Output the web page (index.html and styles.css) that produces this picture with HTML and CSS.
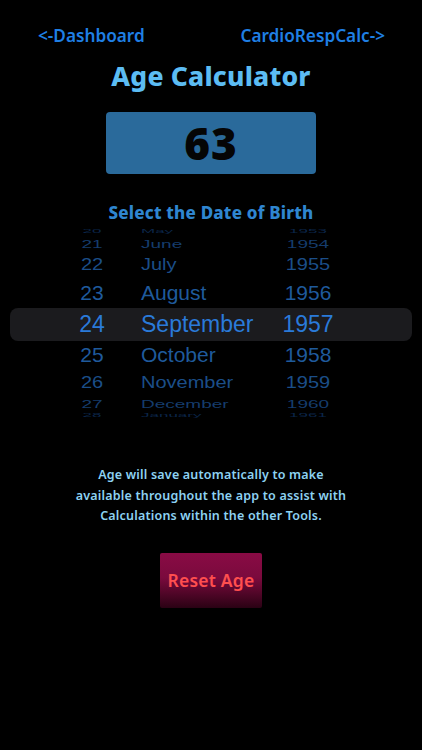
FILE: index.html
```html
<!DOCTYPE html>
<html>
<head>
<meta charset="utf-8">
<link rel="stylesheet" href="styles.css">
</head>
<body>
<div class="screen">
  <nav class="nav">
    <span class="link">&lt;-Dashboard</span>
    <span class="link">CardioRespCalc-&gt;</span>
  </nav>
  <h1 class="title">Age Calculator</h1>
  <div class="agebox">63</div>
  <h2 class="subtitle">Select the Date of Birth</h2>
  <div class="picker">
    <div class="band"></div>
    <div class="row r0"><span class="d">20</span><span class="m">May</span><span class="y">1953</span></div>
    <div class="row r1"><span class="d">21</span><span class="m">June</span><span class="y">1954</span></div>
    <div class="row r2"><span class="d">22</span><span class="m">July</span><span class="y">1955</span></div>
    <div class="row r3 above"><span class="d">23</span><span class="m">August</span><span class="y">1956</span></div>
    <div class="row sel"><span class="d">24</span><span class="m">September</span><span class="y">1957</span></div>
    <div class="row r3"><span class="d">25</span><span class="m">October</span><span class="y">1958</span></div>
    <div class="row r2"><span class="d">26</span><span class="m">November</span><span class="y">1959</span></div>
    <div class="row r1"><span class="d">27</span><span class="m">December</span><span class="y">1960</span></div>
    <div class="row r0"><span class="d">28</span><span class="m">January</span><span class="y">1961</span></div>
  </div>
  <p class="info">Age will save automatically to make<br>available throughout the app to assist with<br>Calculations within the other Tools.</p>
  <div class="btnwrap"><button class="reset">Reset Age</button></div>
</div>
</body>
</html>
```

FILE: styles.css
```css
html, body {
  margin: 0;
  padding: 0;
  background: #000;
}
body {
  font-family: "Noto Sans", "DejaVu Sans", sans-serif;
}
.screen {
  width: 422px;
  height: 750px;
  display: flex;
  flex-direction: column;
  align-items: center;
}
.nav {
  width: 100%;
  box-sizing: border-box;
  display: flex;
  justify-content: space-between;
  padding: 24px 37px 0 38px;
  height: 50px;
}
.link {
  color: #1f7fe4;
  font-size: 17.2px;
  font-weight: 600;
  line-height: 24px;
}
.title {
  margin: 11px 0 0;
  color: #5cbcf3;
  font-size: 26.5px;
  font-weight: 800;
  line-height: 31px;
  letter-spacing: 0.2px;
}
.agebox {
  margin-top: 20px;
  width: 210px;
  height: 62px;
  background: #2a6a9b;
  border-radius: 4px;
  display: flex;
  align-items: center;
  justify-content: center;
  font-size: 44px;
  font-weight: 900;
  color: #050505;
  letter-spacing: 1px;
}
.subtitle {
  margin: 28px 0 0;
  color: #2f86d0;
  font-size: 17px;
  font-weight: 800;
  line-height: 22px;
  letter-spacing: 0.2px;
}
.picker {
  position: relative;
  width: 100%;
  margin-top: 3px;
  font-family: "Liberation Sans", Arial, sans-serif;
  display: flex;
  flex-direction: column;
}
.band {
  position: absolute;
  left: 10px;
  right: 10px;
  top: 81px;
  height: 33px;
  background: #1b1b1e;
  border-radius: 8px;
}
.row {
  position: relative;
  display: grid;
  grid-template-columns: 60px 108px 80px;
  column-gap: 19px;
  padding-left: 62px;
  align-items: center;
  color: #1d5596;
  white-space: nowrap;
}
.row .d, .row .y { text-align: center; }
.row .m { text-align: left; }
.r0 {
  height: 8px;
  font-size: 17px;
  line-height: 8px;
  transform: scaleY(0.3);
  color: #0b2548;
}
.r1 {
  height: 17px;
  font-size: 19px;
  transform: scaleY(0.55);
  color: #153c6c;
}
.r2 {
  height: 25px;
  font-size: 20px;
  transform: scaleY(0.82);
  color: #1b4e88;
}
.r3 {
  height: 30px;
  font-size: 21px;
  color: #1f5a9c;
}
.r3.above {
  height: 31px;
}
.sel {
  height: 32px;
  font-size: 23px;
  color: #2a7ad9;
}
.info {
  margin: 45px 0 0;
  text-align: center;
  color: #8dd2f2;
  font-size: 12.5px;
  font-weight: 600;
  line-height: 20.5px;
  letter-spacing: 0.2px;
}
.btnwrap {
  margin-top: 26px;
}
.reset {
  width: 102px;
  height: 55px;
  border: none;
  border-radius: 2px;
  background: linear-gradient(to bottom, #8a0b45 0%, #7a0a3d 45%, #2a0214 100%);
  color: #ff4f4f;
  font-family: "Noto Sans", "DejaVu Sans", sans-serif;
  font-size: 17.5px;
  font-weight: 600;
  padding: 0;
  letter-spacing: 0.2px;
}
```
